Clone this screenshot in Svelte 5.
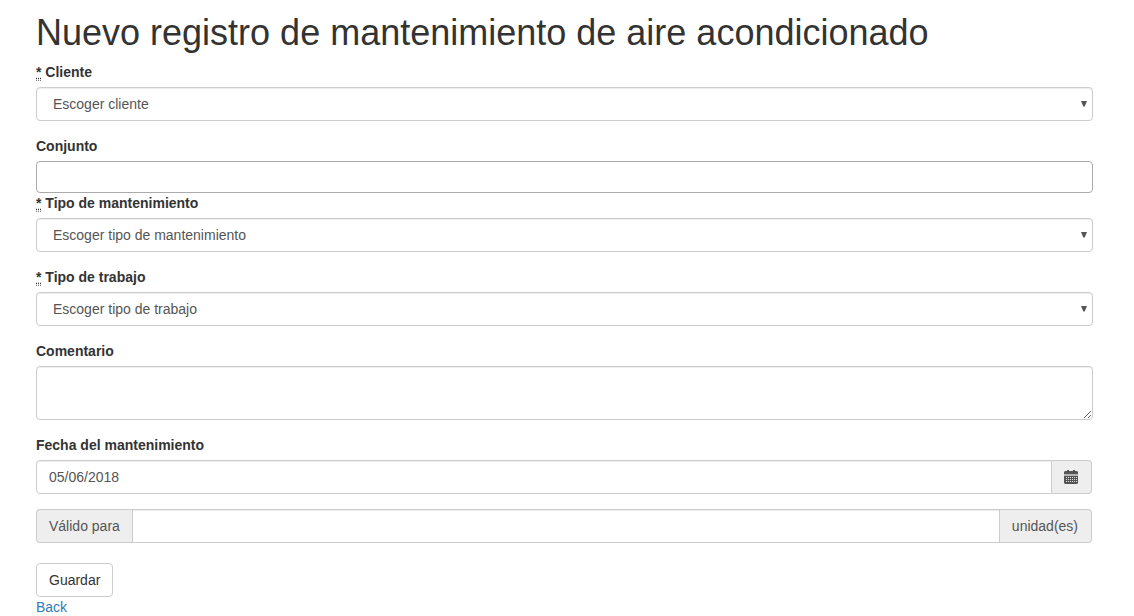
<script>
  let cliente = $state('');
  let conjunto = $state('');
  let tipoMantenimiento = $state('');
  let tipoTrabajo = $state('');
  let comentario = $state('');
  let fecha = $state('05/06/2018');
  let validez = $state('');

  const columns = [2, 4, 6, 8, 10, 12];
  const rows = [7, 9, 11];
</script>

{#snippet picker(id, label, placeholder, get, set)}
  <div class="group">
    <label for={id}><abbr title="obligatorio">*</abbr> {label}</label>
    <div class="select-wrap">
      <select {id} class="control" required bind:value={get, set}>
        <option value="">{placeholder}</option>
      </select>
      <svg class="arrow" viewBox="0 0 6 6" aria-hidden="true"><path d="M0 0H6L3.7 5.4H2.3Z" /></svg>
    </div>
  </div>
{/snippet}

<main>
  <h1>Nuevo registro de mantenimiento de aire acondicionado</h1>

  <form onsubmit={(e) => e.preventDefault()}>
    {@render picker('cliente', 'Cliente', 'Escoger cliente', () => cliente, (v) => (cliente = v))}

    <div class="group tight">
      <label for="conjunto">Conjunto</label>
      <input id="conjunto" class="control tags" type="text" bind:value={conjunto} />
    </div>

    {@render picker('tipo-mantenimiento', 'Tipo de mantenimiento', 'Escoger tipo de mantenimiento', () => tipoMantenimiento, (v) => (tipoMantenimiento = v))}
    {@render picker('tipo-trabajo', 'Tipo de trabajo', 'Escoger tipo de trabajo', () => tipoTrabajo, (v) => (tipoTrabajo = v))}

    <div class="group">
      <label for="comentario">Comentario</label>
      <textarea id="comentario" class="control" rows="2" bind:value={comentario}></textarea>
    </div>

    <div class="group">
      <label for="fecha">Fecha del mantenimiento</label>
      <div class="input-group">
        <input id="fecha" class="control" type="text" bind:value={fecha} />
        <button type="button" class="addon last" aria-label="Abrir calendario">
          <svg class="calendar" viewBox="0 0 14 14" aria-hidden="true">
            <path fill="#555" d="M0 4V2L1 1H3V0H5V1H9V0H11V1H13L14 2V4Z" />
            <path fill="#b5b5b5" d="M0 4H14V6H0Z" />
            <path fill="#555" d="M0 6H14V13L13 14H1L0 13Z" />
            {#each rows as y}
              {#each columns as x}
                <rect {x} {y} width="1" height="1" fill="#ddd" />
              {/each}
            {/each}
          </svg>
        </button>
      </div>
    </div>

    <div class="input-group validity">
      <label class="addon first" for="validez">Válido para</label>
      <input id="validez" class="control" type="text" bind:value={validez} />
      <span class="addon last">unidad(es)</span>
    </div>

    <button type="submit" class="save">Guardar</button>
  </form>

  <a href="#back">Back</a>
</main>

<style>
  :global(body) {
    margin: 0;
    background: #fff;
  }

  main {
    box-sizing: border-box;
    padding: 12px 41px 0 36px;
    color: #333;
    font: 14px/20px "Liberation Sans", Arial, sans-serif;
  }

  main :global(*) {
    box-sizing: border-box;
  }

  h1 {
    margin: 0 0 8px;
    font-size: 36px;
    font-weight: 400;
    line-height: 42px;
  }

  .group {
    margin-bottom: 15px;
  }

  .tight {
    margin-bottom: 0;
  }

  .group > label {
    display: block;
    margin-bottom: 5px;
    font-weight: 700;
  }

  abbr {
    border-bottom: 1px dotted #777;
    text-decoration: underline dotted;
  }

  .control {
    display: block;
    width: 100%;
    height: 34px;
    margin: 0;
    padding: 6px 12px;
    border: 1px solid #ccc;
    border-radius: 4px;
    background: #fff;
    box-shadow: inset 0 1px 1px rgba(0, 0, 0, 0.075);
    color: #555;
    font: inherit;
  }

  select.control {
    padding: 6px 16px;
    appearance: none;
  }

  .select-wrap {
    position: relative;
  }

  .arrow {
    position: absolute;
    top: 14px;
    right: 6px;
    width: 6px;
    height: 6px;
    fill: #555;
    pointer-events: none;
  }

  .tags {
    height: 32px;
    border-color: #aaa;
    box-shadow: none;
  }

  textarea.control {
    height: 54px;
    resize: vertical;
  }

  .input-group {
    display: flex;
    margin-right: 1px;
  }

  .input-group .control {
    flex: 1;
    min-width: 0;
    border-radius: 0;
  }

  .input-group .control:first-child {
    border-radius: 4px 0 0 4px;
  }

  .addon {
    display: flex;
    align-items: center;
    padding: 6px 12px;
    border: 1px solid #ccc;
    background: #eee;
    color: #555;
    font: inherit;
  }

  .first {
    border-right: 0;
    border-radius: 4px 0 0 4px;
  }

  .last {
    padding-right: 13px;
    border-left: 0;
    border-radius: 0 4px 4px 0;
  }

  .calendar {
    display: block;
    width: 14px;
    height: 14px;
  }

  .validity {
    margin-bottom: 20px;
  }

  .save {
    display: block;
    padding: 6px 12px;
    border: 1px solid #ccc;
    border-radius: 4px;
    background: #fff;
    color: #333;
    font: inherit;
  }

  a {
    display: block;
    width: fit-content;
    color: #337ab7;
    text-decoration: none;
  }
</style>
